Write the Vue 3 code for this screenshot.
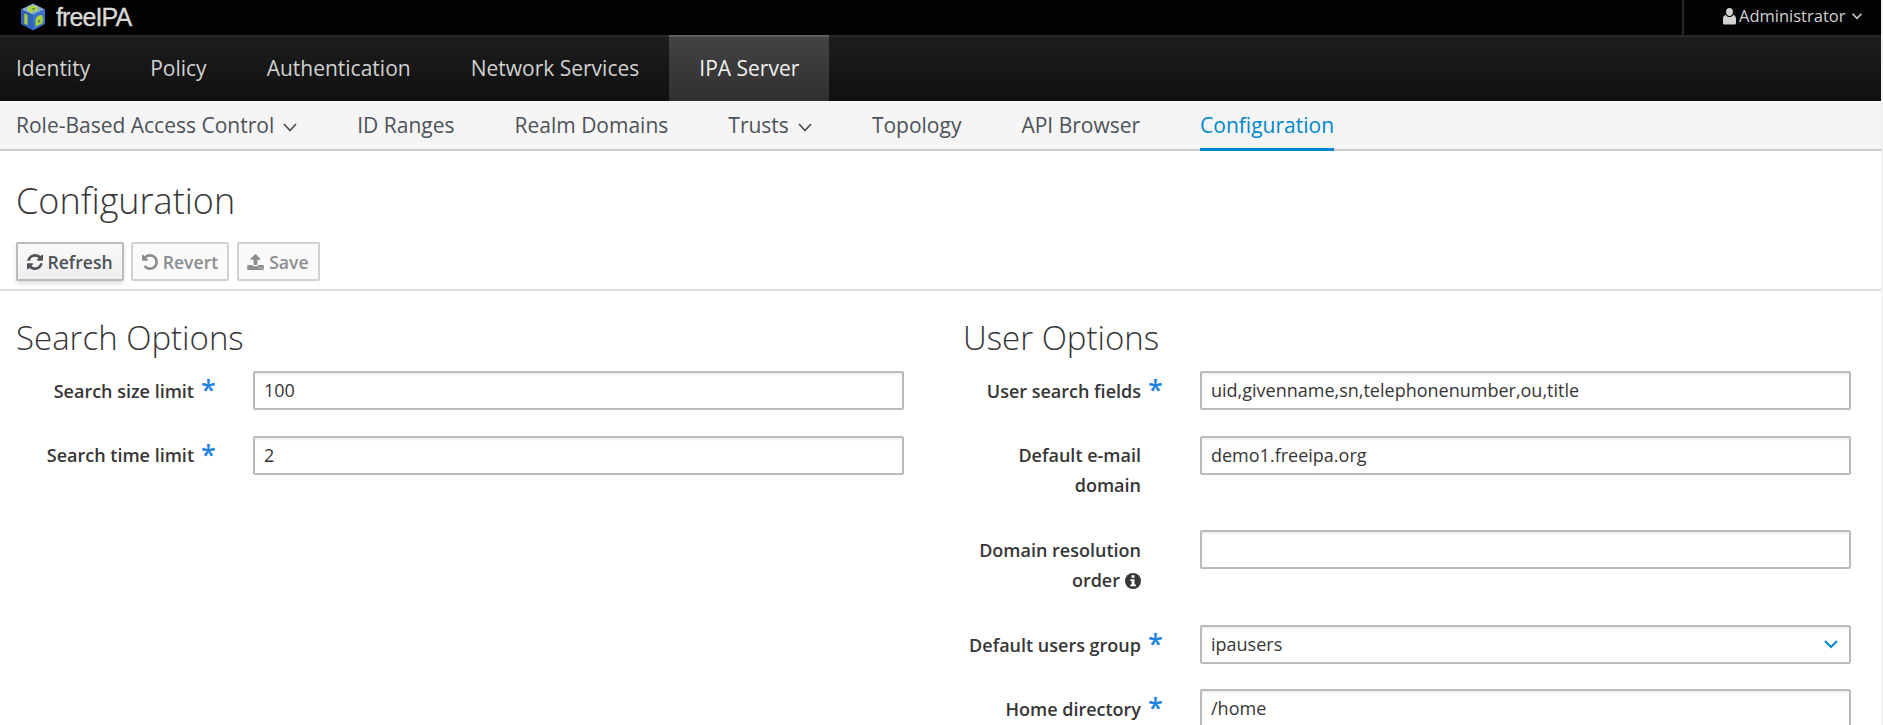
<script setup>
const primary = ['Identity', 'Policy', 'Authentication', 'Network Services', 'IPA Server']
const secondary = [
  { label: 'Role-Based Access Control', menu: true },
  { label: 'ID Ranges' },
  { label: 'Realm Domains' },
  { label: 'Trusts', menu: true },
  { label: 'Topology' },
  { label: 'API Browser' },
  { label: 'Configuration', active: true },
]
const icons = {
  refresh: {
    box: '0 128 1536 1536',
    w: 16,
    d: 'M1511 1056q0 5-1 7-64 268-268 434.5t-478 166.5q-146 0-282.5-55t-243.5-157l-129 129q-19 19-45 19t-45-19-19-45v-448q0-26 19-45t45-19h448q26 0 45 19t19 45-19 45l-137 137q71 66 161 102t187 36q134 0 250-65t186-179q11-17 53-117 8-23 30-23h192q13 0 22.5 9.5t9.5 22.5zm25-800v448q0 26-19 45t-45 19h-448q-26 0-45-19t-19-45 19-45l138-138q-148-137-349-137-134 0-250 65t-186 179q-11 17-53 117-8 23-30 23h-199q-13 0-22.5-9.5t-9.5-22.5v-7q65-268 270-434.5t480-166.5q146 0 284 55.5t245 156.5l130-129q19-19 45-19t45 19 19 45z',
  },
  undo: {
    box: '0 128 1536 1536',
    w: 16,
    d: 'M1536 896q0 156-61 298t-164 245-245 164-298 61q-172 0-327-72.5t-264-204.5q-7-10-6.5-22.5t8.5-20.5l137-138q10-9 25-9 16 2 23 12 73 95 179 147t225 52q104 0 198.5-40.5t163.5-109.5 109.5-163.5 40.5-198.5-40.5-198.5-109.5-163.5-163.5-109.5-198.5-40.5q-98 0-188 35.5t-160 101.5l137 138q31 30 14 69-17 40-59 40h-448q-26 0-45-19t-19-45v-448q0-42 40-59 39-17 69 14l130 129q107-101 244.5-156.5t284.5-55.5q156 0 298 61t245 164 164 245 61 298z',
  },
  upload: {
    box: '0 64 1664 1600',
    w: 17,
    d: 'M1280 1472q0-26-19-45t-45-19-45 19-19 45 19 45 45 19 45-19 19-45zm256 0q0-26-19-45t-45-19-45 19-19 45 19 45 45 19 45-19 19-45zm128-224v320q0 40-28 68t-68 28h-1472q-40 0-68-28t-28-68v-320q0-40 28-68t68-28h427q21 56 70.5 92t110.5 36h256q61 0 110.5-36t70.5-92h427q40 0 68 28t28 68zm-325-648q-17 40-59 40h-256v448q0 26-19 45t-45 19h-256q-26 0-45-19t-19-45v-448h-256q-42 0-59-40-17-39 14-69l448-448q18-19 45-19t45 19l448 448q31 30 14 69z',
  },
}
const buttons = [
  { label: 'Refresh', icon: icons.refresh },
  { label: 'Revert', icon: icons.undo, disabled: true },
  { label: 'Save', icon: icons.upload, disabled: true },
]
const sections = [
  {
    title: 'Search Options',
    fields: [
      { label: 'Search size limit', required: true, value: '100' },
      { label: 'Search time limit', required: true, value: '2' },
    ],
  },
  {
    title: 'User Options',
    fields: [
      { label: 'User search fields', required: true, value: 'uid,givenname,sn,telephonenumber,ou,title' },
      { label: 'Default e-mail domain', value: 'demo1.freeipa.org' },
      { label: 'Domain resolution order', info: true, value: '' },
      { label: 'Default users group', required: true, value: 'ipausers', select: true },
      { label: 'Home directory', required: true, value: '/home' },
    ],
  },
]
</script>

<template>
  <div class="app">
    <header class="top">
      <div class="brand">
        <svg class="cube" width="26" height="28" viewBox="0 0 26 28">
          <path d="M13 .5 25 6.5 13 12 1 6.5z" fill="#7fa9dc" />
          <path d="M1 6.5 13 12v15.5L1 21z" fill="#2f62b8" />
          <path d="M25 6.500 13 12v15.500L25 21z" fill="#3b73cc" />
          <path d="M4.300 10.400l3.200 1.400v10.400l-3.200-1.800z" fill="#a9cf3a" />
          <path d="M7.200 6.800c.4-3.600 5-5.200 8.800-3.600 3.400 1.500 2.800 4.400-.4 5l-2.600.3-1.800 2z" fill="#b3d545" />
          <path d="M11.300 6l2.500-1.200 1.700 1.100-2.300 1.200z" fill="#4b7f50" />
          <path d="M15.500 23.400V17c.6-3.200 3-5 6.100-5 1.600 1.400 1.800 6.400.6 8.600z" fill="#a9cf3a" />
          <path d="M18 18l2.200-1.300v1.800L18 19.600z" fill="#3b6b8a" />
        </svg>
        <span class="wordmark">freeIPA</span>
      </div>
      <div class="user">
        <svg width="13" height="17" viewBox="0 0 13 17" fill="#d1d1d1">
          <path d="M6.500 0c2.100 0 3.500 1.600 3.500 3.700S8.600 8 6.500 8 3 5.800 3 3.700 4.400 0 6.500 0z" />
          <path d="M2.600 6.800C3.500 8.300 4.800 9.100 6.500 9.100s3-.8 3.900-2.300c1.800.7 2.600 2 2.600 4v4.100c0 1-.7 1.600-1.700 1.600H1.700c-1 0-1.700-.6-1.700-1.600v-4.100c0-2 .8-3.300 2.600-4z" />
        </svg>
        <span class="name">Administrator</span>
        <svg width="10" height="7" viewBox="0 0 10 7" fill="none" stroke="#d1d1d1" stroke-width="1.600"><path d="M.6.8 5 5.400 9.400.8" /></svg>
      </div>
    </header>

    <nav class="primary">
      <a v-for="item in primary" :key="item" :class="{ active: item === 'IPA Server' }">{{ item }}</a>
    </nav>

    <nav class="secondary">
      <a v-for="item in secondary" :key="item.label" :class="{ active: item.active }">
        {{ item.label }}
        <svg v-if="item.menu" class="caret" width="14" height="9" viewBox="0 0 14 9" fill="none" stroke="#4d5258" stroke-width="1.800"><path d="M1 1 7 7.500 13 1" /></svg>
      </a>
    </nav>

    <main>
      <h1>Configuration</h1>
      <div class="toolbar">
        <button v-for="b in buttons" :key="b.label" :class="{ off: b.disabled }">
          <svg :width="b.icon.w" height="16" :viewBox="b.icon.box" fill="currentColor"><path :d="b.icon.d" /></svg>
          <span>{{ b.label }}</span>
        </button>
      </div>

      <div class="columns">
        <section v-for="s in sections" :key="s.title">
          <h2>{{ s.title }}</h2>
          <div v-for="f in s.fields" :key="f.label" class="row">
            <label>{{ f.label }}<svg v-if="f.info" class="info" width="16" height="16" viewBox="0 0 16 16">
              <circle cx="8" cy="8" r="8" fill="#363636" />
              <path d="M6.500 2.300h3v2.500h-3zM5.300 6.200h4.200v5.200h1.400v1.800H5.300v-1.800h1.300V8H5.300z" fill="#fff" />
            </svg></label>
            <span class="star">{{ f.required ? '*' : '' }}</span>
            <div class="field">
              <span>{{ f.value }}</span>
              <svg v-if="f.select" width="14" height="9" viewBox="0 0 14 9" fill="none" stroke="#0088ce" stroke-width="2"><path d="M1 1 7 7 13 1" /></svg>
            </div>
          </div>
        </section>
      </div>
    </main>
  </div>
</template>

<style>
body {
  overflow: hidden;
  background: #f1f1f1;
}
</style>

<style scoped>
.app {
  box-sizing: border-box;
  width: 1881px;
  height: 725px;
  overflow: hidden;
  background: #fff;
  color: #363636;
  font-family: "Open Sans", sans-serif;
  font-size: 18px;
}
.top {
  display: flex;
  justify-content: space-between;
  height: 35px;
  background: #030303;
  border-bottom: 2px solid #292929;
}
.brand {
  display: flex;
  align-items: flex-start;
  padding: 3px 0 0 20px;
}
.wordmark {
  margin-left: 10px;
  font: 25px/28px "Liberation Sans", sans-serif;
  letter-spacing: -0.9px;
  color: #d9d9d9;
  -webkit-text-stroke: 0.3px #d9d9d9;
}
.user {
  display: flex;
  align-items: center;
  box-sizing: border-box;
  width: 199px;
  height: 35px;
  padding: 0 0 3px 39px;
  border-left: 2px solid #292929;
  color: #d1d1d1;
}
.name {
  margin: 0 7px 0 3px;
  font-size: 16.5px;
  line-height: 30px;
}
.primary {
  display: flex;
  height: 64px;
  padding-left: 16px;
  background: linear-gradient(#1d1d1d, #101010);
}
.primary a {
  box-sizing: border-box;
  height: 66px;
  margin-top: -2px;
  padding: 2px 30px 0;
  font-size: 21px;
  line-height: 62px;
  color: #d1d1d1;
}
.primary a:first-child {
  padding-left: 0;
}
.primary .active {
  border-top: 2px solid #5e5e5e;
  padding-top: 0;
  background: linear-gradient(#434343, #303030);
  color: #f1f1f1;
}
.secondary {
  display: flex;
  gap: 60px;
  height: 48px;
  padding-left: 16px;
  background: #f5f5f5;
  border-bottom: 2px solid #ccc;
}
.secondary a {
  box-sizing: border-box;
  height: 50px;
  font-size: 21px;
  line-height: 48px;
  color: #4d5258;
  white-space: nowrap;
}
.secondary .active {
  border-bottom: 3px solid #0088ce;
  color: #0088ce;
}
.caret {
  margin: 0 0.3px 1px 3.3px;
}
h1,
h2 {
  margin: 0;
  font-weight: 300;
}
h1 {
  padding: 25px 0 1px 16px;
  font-size: 36px;
  line-height: 50px;
}
.toolbar {
  display: flex;
  gap: 7.5px;
  padding: 15px 16px 8px;
  border-bottom: 2px solid #ddd;
}
button {
  display: flex;
  align-items: center;
  gap: 5px;
  box-sizing: border-box;
  height: 39px;
  padding: 0 9px 0 8.5px;
  border: 2px solid #bbb;
  border-radius: 2px;
  background: linear-gradient(#fafafa, #ededed);
  box-shadow: 0 3px 4px rgba(3, 3, 3, 0.12);
  color: #4d5258;
  font: 600 17.6px/30px "Open Sans", sans-serif;
}
button.off {
  border-color: #d1d1d1;
  background: #fafafa;
  box-shadow: none;
  color: #8b8d8f;
}
.columns {
  display: grid;
  grid-template-columns: 888px 888px;
  column-gap: 59px;
  padding-left: 16px;
}
h2 {
  padding: 24px 0 10px;
  font-size: 33px;
  line-height: 46px;
}
.row {
  display: grid;
  grid-template-columns: 178px 59px 651px;
  margin-bottom: 26px;
}
.row:nth-of-type(4) {
  margin-bottom: 25px;
}
.row:has(.info) {
  margin-bottom: 27px;
}
label {
  padding-top: 5px;
  margin-bottom: 3px;
  font-weight: 600;
  line-height: 30px;
  text-align: right;
}
.row:nth-of-type(2) label {
  padding-top: 4px;
  margin-bottom: 4px;
}
.info {
  margin-left: 5px;
  vertical-align: -2px;
}
.star {
  height: 30px;
  padding: 4px 0 0 7px;
  font-size: 27px;
  font-weight: 600;
  line-height: 30px;
  color: #1f83e0;
}
.field {
  display: flex;
  align-items: center;
  justify-content: space-between;
  box-sizing: border-box;
  height: 39px;
  padding: 0 11px 1px 9px;
  border: 2px solid #bbb;
  border-radius: 2px;
  box-shadow: inset 0 2px 2px rgba(3, 3, 3, 0.06);
}
</style>
